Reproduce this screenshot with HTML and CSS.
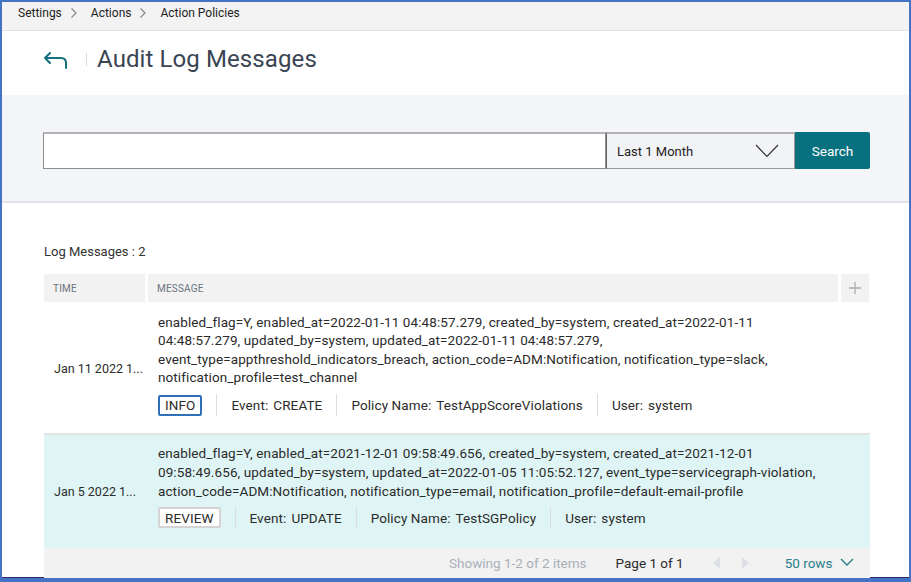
FILE: index.html
```html
<!DOCTYPE html>
<html lang="en">
<head>
<meta charset="utf-8">
<title>Audit Log Messages</title>
<link rel="stylesheet" href="styles.css">
</head>
<body>
<div class="frame">
  <nav class="crumbs">
    <span>Settings</span>
    <svg class="crumb-chev" width="8" height="12" viewBox="0 0 8 12"><path d="M1.5 1.5 L6 6 L1.5 10.5" fill="none" stroke="#8a8a8a" stroke-width="1.3"/></svg>
    <span>Actions</span>
    <svg class="crumb-chev" width="8" height="12" viewBox="0 0 8 12"><path d="M1.5 1.5 L6 6 L1.5 10.5" fill="none" stroke="#8a8a8a" stroke-width="1.3"/></svg>
    <span>Action Policies</span>
  </nav>

  <header class="head">
    <svg class="back" width="25" height="18" viewBox="0 0 25 18"><path d="M7 2 L2 7 L7 12 M2 7 L18 7 Q23 7 23 12 L23 17" fill="none" stroke="#16707e" stroke-width="2" stroke-linecap="round" stroke-linejoin="round"/></svg>
    <span class="head-sep"></span>
    <h1 class="title">Audit Log Messages</h1>
  </header>

  <section class="filter">
    <div class="searchbar">
      <div class="search-input"></div>
      <div class="range">
        <span>Last 1 Month</span>
        <svg width="24" height="14" viewBox="0 0 24 14"><path d="M1 1 L12 12.5 L23 1" fill="none" stroke="#333" stroke-width="1.2"/></svg>
      </div>
      <button class="search-btn">Search</button>
    </div>
  </section>

  <main class="content">
    <p class="count">Log Messages : 2</p>
    <div class="table">
      <div class="thead">
        <div class="th">TIME</div>
        <div class="th">MESSAGE</div>
        <div class="th th-add">
          <svg width="12" height="12" viewBox="0 0 12 12"><path d="M6 0 V12 M0 6 H12" stroke="#a8adb4" stroke-width="1.3"/></svg>
        </div>
      </div>

      <div class="row">
        <div class="time">Jan 11 2022 1...</div>
        <div class="msg">
          <p class="msg-text">enabled_flag=Y, enabled_at=2022-01-11 04:48:57.279, created_by=system, created_at=2022-01-11 04:48:57.279, updated_by=system, updated_at=2022-01-11 04:48:57.279, event_type=appthreshold_indicators_breach, action_code=ADM:Notification, notification_type=slack, notification_profile=test_channel</p>
          <div class="tags">
            <span class="badge badge-info">INFO</span>
            <span class="tag">Event:<span class="val">CREATE</span></span>
            <span class="tag">Policy Name:<span class="val">TestAppScoreViolations</span></span>
            <span class="tag">User:<span class="val">system</span></span>
          </div>
        </div>
      </div>

      <div class="row row-sel">
        <div class="time">Jan 5 2022 1...</div>
        <div class="msg">
          <p class="msg-text">enabled_flag=Y, enabled_at=2021-12-01 09:58:49.656, created_by=system, created_at=2021-12-01 09:58:49.656, updated_by=system, updated_at=2022-01-05 11:05:52.127, event_type=servicegraph-violation, action_code=ADM:Notification, notification_type=email, notification_profile=default-email-profile</p>
          <div class="tags">
            <span class="badge badge-review">REVIEW</span>
            <span class="tag">Event:<span class="val">UPDATE</span></span>
            <span class="tag">Policy Name:<span class="val">TestSGPolicy</span></span>
            <span class="tag">User:<span class="val">system</span></span>
          </div>
        </div>
      </div>

      <div class="tfoot">
        <span class="showing">Showing 1-2 of 2 items</span>
        <span class="page">Page 1 of 1</span>
        <span class="pager">
          <svg width="8" height="12" viewBox="0 0 8 12"><path d="M7 0 L0 6 L7 12 Z" fill="#dcdfe3"/></svg>
          <svg width="8" height="12" viewBox="0 0 8 12"><path d="M1 0 L8 6 L1 12 Z" fill="#dcdfe3"/></svg>
        </span>
        <span class="rows">50 rows
          <svg width="14" height="9" viewBox="0 0 14 9"><path d="M1 1 L7 7 L13 1" fill="none" stroke="#2a7d8c" stroke-width="1.4"/></svg>
        </span>
      </div>
    </div>
  </main>
  <span class="scroll-mark"></span>
</div>
</body>
</html>
```
FILE: styles.css
```css
* { box-sizing: border-box; }
html, body { margin: 0; padding: 0; }
body {
  font-family: Roboto, "Liberation Sans", sans-serif;
  color: #2b2b2b;
  background: #4472c4;
}
.frame {
  position: relative;
  width: 911px;
  height: 582px;
  border-top: 2px solid #4472c4;
  border-left: 2px solid #4472c4;
  border-right: 2px solid #4472c4;
  border-bottom: 4px solid #4472c4;
  background: #fff;
  overflow: hidden;
  box-shadow: inset 0 -1px 0 #2e2d6b;
}
.crumbs {
  height: 29px;
  background: #f3f3f3;
  border-bottom: 1px solid #e1e2ea;
  display: flex;
  align-items: center;
  padding: 0 0 6px 16px;
  font-size: 12px;
  color: #222;
}
.crumb-chev { margin: 0 13px 0 8px; }

.head {
  height: 64px;
  display: flex;
  align-items: center;
  padding: 0 0 8px 41px;
}
.back { margin-top: 2px; }
.head-sep {
  width: 1px;
  height: 13px;
  background: #dcdcdc;
  margin-left: 18px;
  margin-right: 10px;
}
.title {
  margin: 0;
  font-size: 24px;
  font-weight: 400;
  color: #3a4453;
  letter-spacing: 0.1px;
}

.filter {
  height: 108px;
  background: #f4f5f9;
  border-bottom: 2px solid #e3e4ea;
  padding: 37px 0 0 41px;
}
.searchbar {
  display: flex;
  height: 37px;
  width: 827px;
}
.search-input {
  width: 563px;
  background: #fff;
  border: 1px solid #8c8c8c;
  border-top: 2px solid #b3b3b3;
}
.range {
  width: 189px;
  background: #f2f3f7;
  border: 1px solid #9a9a9a;
  border-left: 1px solid #666;
  border-top: 2px solid #b3b3b3;
  display: flex;
  align-items: center;
  justify-content: space-between;
  padding: 0 15px 0 10px;
  font-size: 13px;
  color: #222;
}
.search-btn {
  width: 75px;
  border: none;
  background: #08717f;
  color: #fff;
  font-family: inherit;
  font-size: 13.5px;
  border-radius: 0 2px 2px 0;
  padding: 0;
}

.content { padding: 0 39px 0 42px; }
.count {
  margin: 40px 0 0;
  font-size: 13px;
  line-height: 18px;
  color: #333;
}
.table { margin-top: 13px; }
.thead {
  display: grid;
  grid-template-columns: 101px 690px 28px;
  column-gap: 3px;
  height: 28px;
}
.th {
  background: #f2f2f2;
  font-size: 10px;
  color: #6c7480;
  display: flex;
  align-items: center;
  padding-left: 9px;
  letter-spacing: 0.2px;
}
.th-add { justify-content: center; padding-left: 0; }

.row {
  display: grid;
  grid-template-columns: 104px 1fr;
  border-top: 1px solid #fff;
  background: #fff;
}
.row-sel {
  background: #dff5f5;
  border-top: 2px solid #e4e4e4;
}
.time {
  font-size: 12.5px;
  color: #2b2b2b;
  align-self: center;
  padding-left: 10px;
  white-space: nowrap;
}
.msg { padding: 10px 0 17px 10px; }
.row-sel .msg { padding: 9px 0 19px 10px; }
.msg-text {
  margin: 0;
  width: 672px;
  font-size: 13.5px;
  letter-spacing: 0.1px;
  line-height: 18.3px;
  color: #2b2b2b;
}
.row-sel .msg-text { line-height: 18.8px; }
.tags {
  display: flex;
  align-items: center;
  margin-top: 8px;
  height: 22px;
  font-size: 13.5px;
  letter-spacing: 0.1px;
  color: #2b2b2b;
}
.row-sel .tags { margin-top: 6px; }
.badge {
  height: 21px;
  display: flex;
  align-items: center;
  padding: 0 6px;
  border-radius: 2px;
  background: #fff;
}
.badge-info { border: 2px solid #2f70b8; padding: 0 5px; }
.badge-review { border: 2px solid #d4d4d4; padding: 0 5px; }
.tag {
  display: flex;
  align-items: center;
  height: 22px;
  border-left: 1px solid #dddddd;
  margin-left: 14px;
  padding-left: 14px;
}
.val { margin-left: 5px; }

.tfoot {
  height: 30px;
  background: #f2f2f2;
  display: flex;
  align-items: center;
  font-size: 13.5px;
  padding-left: 405px;
}
.showing { color: #a9b0b8; }
.page { margin-left: 29px; color: #2b2b2b; }
.pager { margin-left: 29px; display: flex; gap: 20px; }
.rows {
  margin-left: 36px;
  color: #2a7d8c;
  display: flex;
  align-items: center;
  gap: 8px;
}
.scroll-mark {
  position: absolute;
  left: 121px;
  bottom: -4px;
  width: 60px;
  height: 2px;
  background: #c06a3c;
}
```
